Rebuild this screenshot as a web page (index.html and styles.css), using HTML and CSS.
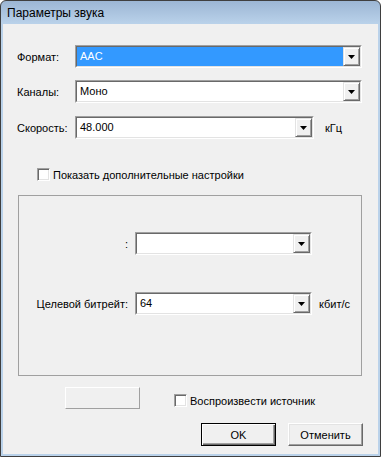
FILE: index.html
```html
<!DOCTYPE html>
<html lang="ru">
<head>
    <meta charset="UTF-8">
    <title>Параметры звука</title>
    <link rel="stylesheet" href="styles.css">
</head>
<body>
    <div class="window">
        <div class="titlebar">Параметры звука</div>
        <div class="client">
            <div class="rows">
                <div class="row">
                    <span class="lbl">Формат:</span>
                    <div class="combo combo-wide">
                        <div class="combo-inner">
                            <span class="combo-value selected">AAC</span>
                            <span class="combo-btn"><svg width="7" height="4" viewBox="0 0 7 4"><polygon points="0,0 7,0 3.5,4" fill="#000"/></svg></span>
                        </div>
                    </div>
                </div>
                <div class="row row-2">
                    <span class="lbl">Каналы:</span>
                    <div class="combo combo-wide">
                        <div class="combo-inner">
                            <span class="combo-value">Моно</span>
                            <span class="combo-btn"><svg width="7" height="4" viewBox="0 0 7 4"><polygon points="0,0 7,0 3.5,4" fill="#000"/></svg></span>
                        </div>
                    </div>
                </div>
                <div class="row row-3">
                    <span class="lbl">Скорость:</span>
                    <div class="combo combo-rate">
                        <div class="combo-inner">
                            <span class="combo-value">48.000</span>
                            <span class="combo-btn"><svg width="7" height="4" viewBox="0 0 7 4"><polygon points="0,0 7,0 3.5,4" fill="#000"/></svg></span>
                        </div>
                    </div>
                    <span class="unit">кГц</span>
                </div>
            </div>

            <label class="check-row advanced">
                <span class="checkbox"></span>
                <span>Показать дополнительные настройки</span>
            </label>

            <div class="group">
                <div class="group-row">
                    <span class="group-lbl">:</span>
                    <div class="combo combo-group">
                        <div class="combo-inner">
                            <span class="combo-value"></span>
                            <span class="combo-btn"><svg width="7" height="4" viewBox="0 0 7 4"><polygon points="0,0 7,0 3.5,4" fill="#000"/></svg></span>
                        </div>
                    </div>
                </div>
                <div class="group-row group-row-2">
                    <span class="group-lbl">Целевой битрейт:</span>
                    <div class="combo combo-group">
                        <div class="combo-inner">
                            <span class="combo-value">64</span>
                            <span class="combo-btn"><svg width="7" height="4" viewBox="0 0 7 4"><polygon points="0,0 7,0 3.5,4" fill="#000"/></svg></span>
                        </div>
                    </div>
                    <span class="unit unit-bitrate">кбит/с</span>
                </div>
            </div>

            <div class="bottom-row">
                <button type="button" class="btn btn-blank"></button>
                <label class="check-row play">
                    <span class="checkbox"></span>
                    <span>Воспроизвести источник</span>
                </label>
            </div>

            <div class="buttons">
                <button type="button" class="btn btn-default">OK</button>
                <button type="button" class="btn">Отменить</button>
            </div>
        </div>
    </div>
</body>
</html>
```

FILE: styles.css
```css
body {
    margin: 0;
    font-family: 'Liberation Sans', Arial, sans-serif;
    font-size: 11px;
    color: #000;
}
.window {
    width: 381px;
    height: 457px;
    box-sizing: border-box;
    border: 1px solid #3f3f3f;
    border-radius: 6px 6px 0 0;
    background: linear-gradient(#9cb6d4, #bad2ea 23px, #bad2ea);
    display: flex;
    flex-direction: column;
}
.titlebar {
    height: 23px;
    line-height: 24px;
    padding-left: 6px;
    font-size: 12px;
    color: #000;
}
.client {
    flex: 1;
    margin: 0 2px 2px 2px;
    background: #f0f0f0;
    padding-left: 14px;
}
.rows {
    padding-top: 21px;
}
.row {
    display: flex;
    align-items: center;
    height: 23px;
}
.row-2 {
    margin-top: 12px;
}
.row-3 {
    margin-top: 13px;
}
.lbl {
    width: 58px;
}
.combo {
    height: 23px;
    box-sizing: border-box;
    border: 1px solid;
    border-color: #a0a0a0 #fff #fff #a0a0a0;
    display: flex;
}
.combo-wide {
    width: 287px;
}
.combo-rate {
    width: 239px;
}
.combo-group {
    width: 177px;
}
.combo-inner {
    flex: 1;
    display: flex;
    border: 1px solid;
    border-color: #696969 #e3e3e3 #e3e3e3 #696969;
    background: #fff;
}
.combo-value {
    flex: 1;
    padding-left: 3px;
    line-height: 19px;
}
.combo-value.selected {
    background: #3399ff;
    color: #fff;
}
.combo-btn {
    width: 15px;
    border: 1px solid;
    border-color: #e3e3e3 #696969 #696969 #e3e3e3;
    box-shadow: inset 1px 1px #fff, inset -1px -1px #a0a0a0;
    background: #f0f0f0;
    display: flex;
    align-items: center;
    justify-content: center;
}
.unit {
    margin-left: 11px;
}
.check-row {
    display: flex;
    align-items: center;
    gap: 3px;
}
.checkbox {
    width: 13px;
    height: 13px;
    box-sizing: border-box;
    border: 1px solid;
    border-color: #a0a0a0 #fff #fff #a0a0a0;
    box-shadow: inset 1px 1px #696969, inset -1px -1px #e3e3e3;
    background: #fff;
}
.advanced {
    margin-top: 29px;
    margin-left: 20px;
    height: 13px;
}
.group {
    margin-top: 14px;
    margin-left: 1px;
    width: 344px;
    height: 181px;
    box-sizing: border-box;
    border: 1px solid #a0a0a0;
    padding-top: 36px;
}
.group-row {
    display: flex;
    align-items: center;
    height: 23px;
}
.group-row-2 {
    margin-top: 37px;
}
.group-lbl {
    width: 109px;
    text-align: right;
    margin-right: 7px;
}
.unit-bitrate {
    margin-left: 7px;
}
.bottom-row {
    display: flex;
    align-items: center;
    margin-top: 11px;
    height: 22px;
}
.btn {
    font-family: inherit;
    font-size: 11px;
    color: #000;
    width: 75px;
    height: 23px;
    padding: 0;
    background: #f0f0f0;
    border: 1px solid;
    border-color: #fff #696969 #696969 #fff;
    box-shadow: inset -1px -1px #a0a0a0, inset 1px 1px #e3e3e3;
}
.btn-blank {
    margin-left: 48px;
    height: 22px;
    border-color: #fff #a0a0a0 #a0a0a0 #fff;
    box-shadow: none;
}
.play {
    margin-left: 34px;
    margin-top: 5px;
}
.buttons {
    display: flex;
    justify-content: flex-end;
    gap: 12px;
    margin-top: 14px;
    padding-right: 15px;
}
.btn-default {
    border: 1px solid #000;
    box-shadow: inset 1px 1px #fff, inset -1px -1px #696969, inset -2px -2px #a0a0a0;
}
```
